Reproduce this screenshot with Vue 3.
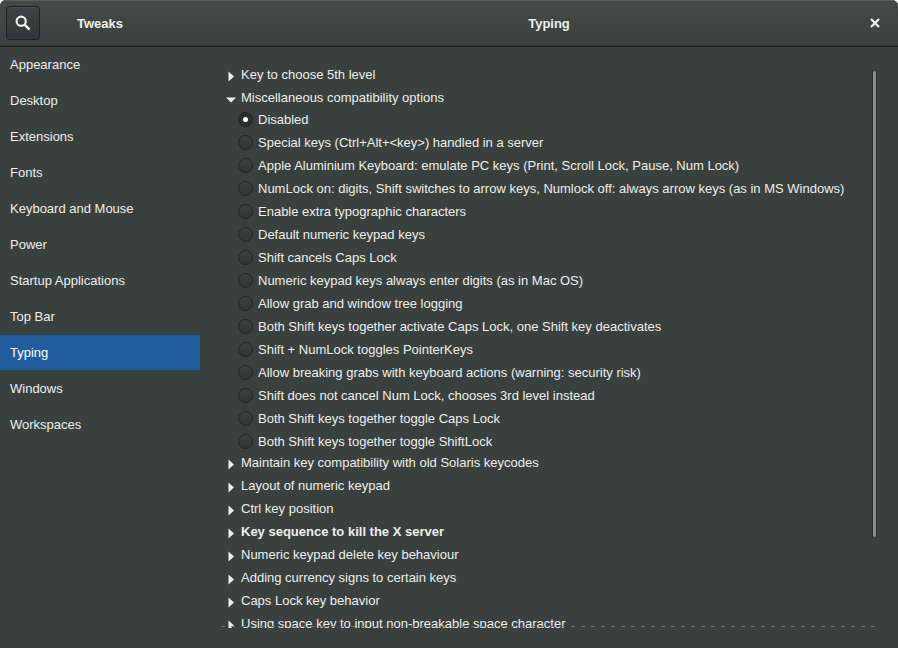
<script setup>
import { ref } from 'vue'

const pages = [
  'Appearance', 'Desktop', 'Extensions', 'Fonts', 'Keyboard and Mouse', 'Power',
  'Startup Applications', 'Top Bar', 'Typing', 'Windows', 'Workspaces',
]
const current = ref('Typing')

const groups = ref([
  { title: 'Key to choose 5th level' },
  {
    title: 'Miscellaneous compatibility options',
    open: true,
    options: [
      'Disabled',
      'Special keys (Ctrl+Alt+<key>) handled in a server',
      'Apple Aluminium Keyboard: emulate PC keys (Print, Scroll Lock, Pause, Num Lock)',
      'NumLock on: digits, Shift switches to arrow keys, Numlock off: always arrow keys (as in MS Windows)',
      'Enable extra typographic characters',
      'Default numeric keypad keys',
      'Shift cancels Caps Lock',
      'Numeric keypad keys always enter digits (as in Mac OS)',
      'Allow grab and window tree logging',
      'Both Shift keys together activate Caps Lock, one Shift key deactivates',
      'Shift + NumLock toggles PointerKeys',
      'Allow breaking grabs with keyboard actions (warning: security risk)',
      'Shift does not cancel Num Lock, chooses 3rd level instead',
      'Both Shift keys together toggle Caps Lock',
      'Both Shift keys together toggle ShiftLock',
    ],
  },
  { title: 'Maintain key compatibility with old Solaris keycodes' },
  { title: 'Layout of numeric keypad' },
  { title: 'Ctrl key position' },
  { title: 'Key sequence to kill the X server', changed: true },
  { title: 'Numeric keypad delete key behaviour' },
  { title: 'Adding currency signs to certain keys' },
  { title: 'Caps Lock key behavior' },
  { title: 'Using space key to input non-breakable space character' },
])
const selected = ref('Disabled')
</script>

<template>
  <div class="window">
    <header class="titlebar">
      <div class="title-left">
        <button class="search" type="button" aria-label="Search">
          <svg width="16" height="16" viewBox="0 0 16 16" fill="none" stroke="currentColor">
            <circle cx="6.2" cy="6.2" r="4.6" stroke-width="2.200" />
            <path d="M9.600 9.600l5 5" stroke-width="2.600" />
          </svg>
        </button>
        <h1>Tweaks</h1>
      </div>
      <div class="title-right">
        <h1>Typing</h1>
        <button class="close" type="button" aria-label="Close">
          <svg width="10" height="10" viewBox="0 0 10 10" fill="none" stroke="currentColor" stroke-width="2.4">
            <path d="M1 1l8 8M9 1l-8 8" />
          </svg>
        </button>
      </div>
    </header>

    <div class="body">
      <nav class="sidebar">
        <a
          v-for="page in pages"
          :key="page"
          href="#"
          :class="{ active: page === current }"
          @click.prevent="current = page"
        >{{ page }}</a>
      </nav>

      <main class="content">
        <div class="scroller">
          <section v-for="group in groups" :key="group.title">
            <button
              class="expander"
              :class="{ changed: group.changed }"
              type="button"
              :aria-expanded="!!group.open"
              @click="group.open = !group.open"
            >
              <svg class="arrow" width="11" height="11" viewBox="0 0 11 11" fill="currentColor">
                <path v-if="group.open" d="M1 3.500h10L6 8.500z" />
                <path v-else d="M3.500 0.500l5.500 5L3.500 10.500z" />
              </svg>
              <span>{{ group.title }}</span>
            </button>
            <div v-if="group.open && group.options" class="options" role="radiogroup" :aria-label="group.title">
              <label v-for="option in group.options" :key="option">
                <input v-model="selected" type="radio" name="compat" :value="option" />
                <span>{{ option }}</span>
              </label>
            </div>
          </section>
        </div>
        <div class="track"><div class="thumb"></div></div>
        <div class="undershoot"></div>
      </main>
    </div>
  </div>
</template>

<style>
body {
  background: #fff;
}
</style>

<style scoped>
.window {
  display: flex;
  flex-direction: column;
  height: 100vh;
  overflow: hidden;
  border-radius: 6px 6px 0 0;
  background: #39413f;
  color: #eeeeec;
  font: 13px/20px "Liberation Sans", Arial, sans-serif;
}

button {
  margin: 0;
  padding: 0;
  border: 0;
  background: none;
  color: inherit;
  font: inherit;
}

.titlebar {
  display: flex;
  flex: none;
  border-bottom: 1px solid #1d2423;
  background: linear-gradient(#434a48, #394140);
  box-shadow: inset 0 1px #56605d, inset 0 -1px #2d3534;
}

.title-left,
.title-right {
  display: grid;
  grid-template-columns: 34px 1fr 34px;
  align-items: center;
  padding: 6px;
}

.title-left {
  flex: none;
  width: 200px;
  box-sizing: border-box;
}

.title-right {
  flex: 1;
}

h1 {
  grid-column: 2;
  margin: 0;
  padding-top: 2px;
  font-size: 13px;
  font-weight: bold;
  text-align: center;
}

.search,
.close {
  display: flex;
  align-items: center;
  justify-content: center;
  height: 34px;
}

.search {
  border: 1px solid #1d2322;
  border-radius: 4px;
  background: linear-gradient(#3e4443, #313736);
  box-shadow: inset 0 1px #474e4c;
}

.body {
  display: flex;
  flex: 1;
  min-height: 0;
}

.sidebar {
  display: flex;
  flex: none;
  flex-direction: column;
  gap: 1px;
  width: 200px;
}

.sidebar a {
  padding: 0 10px;
  color: inherit;
  line-height: 35px;
  text-decoration: none;
}

.sidebar .active {
  background: #215d9c;
  color: #fff;
}

.content {
  position: relative;
  display: flex;
  flex: 1;
  min-width: 0;
  margin: 16px 20px 20px;
}

.scroller {
  flex: 1;
  overflow-y: auto;
  scrollbar-width: none;
  padding-left: 5px;
}

.expander {
  display: flex;
  align-items: center;
  gap: 5px;
  width: 100%;
  height: 23px;
  text-align: left;
}

.expander .arrow {
  flex: none;
  margin-top: 3px;
}

.changed {
  font-weight: bold;
}

.options {
  display: grid;
  gap: 3px;
  padding-left: 13px;
}

.options label {
  display: flex;
  align-items: center;
  gap: 5px;
  height: 20px;
  white-space: nowrap;
}

.options span {
  padding-top: 2px;
}

.options input {
  display: grid;
  flex: none;
  place-content: center;
  width: 15px;
  height: 15px;
  margin: 0;
  border: 1px solid #1f2525;
  border-radius: 50%;
  appearance: none;
  background: linear-gradient(#3b4241, #303636);
}

.options input:checked {
  background: #2b3130;
}

.options input:checked::before {
  width: 5px;
  height: 5px;
  border-radius: 50%;
  background: #fff;
  content: "";
}

.track {
  position: absolute;
  top: 7px;
  right: 1px;
  bottom: 7px;
  width: 5px;
}

.thumb {
  height: 85%;
  box-sizing: border-box;
  border: 1px solid #2a302f;
  border-radius: 3px;
  background: #878d8b;
}

.undershoot {
  position: absolute;
  right: 2px;
  bottom: 1px;
  left: 1px;
  height: 1px;
  background: repeating-linear-gradient(90deg, #69706e 0 4px, transparent 4px 10px);
}
</style>
